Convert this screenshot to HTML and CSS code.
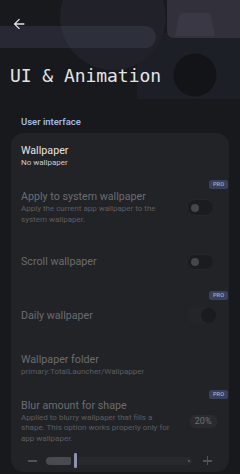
FILE: index.html
```html
<!DOCTYPE html>
<html lang="en">
<head>
<meta charset="utf-8">
<title>UI &amp; Animation</title>
<link rel="stylesheet" href="styles.css">
</head>
<body>
<div class="screen">
  <svg class="art" width="240" height="110" viewBox="0 0 240 110" aria-hidden="true">
    <path d="M137 46 Q137 33 150 33 H240 V99 H137 Z" fill="#1d1f27"/>
    <circle cx="113" cy="17" r="53" fill="#212229"/>
    <circle cx="195" cy="75" r="21.5" fill="#131418"/>
    <rect x="-20" y="26" width="176" height="22" rx="11" fill="rgba(72,76,98,0.32)"/>
    <path d="M167 0 H240 V38 H174 Q167 38 167 31 Z" fill="#32303a"/>
    <path d="M183 13 H207 Q210 13 211 16 L215 36 H175 L179 16 Q180 13 183 13 Z" fill="#3a3845"/>
  </svg>
  <header class="appbar">
    <button class="back" aria-label="Back">
      <svg width="16" height="16" viewBox="0 0 24 24"><path d="M20 11H7.83l5.59-5.59L12 4l-8 8 8 8 1.41-1.41L7.83 13H20v-2z" fill="#e2e2e6"/></svg>
    </button>
    <h1 class="title">UI &amp; Animation</h1>
  </header>

  <h2 class="section">User interface</h2>

  <section class="card">
    <div class="row r1">
      <div class="main">
        <div class="text">
          <div class="t">Wallpaper</div>
          <div class="s">No wallpaper</div>
        </div>
      </div>
    </div>

    <div class="row r2 off">
      <div class="badge-line b2"><span class="pro">PRO</span></div>
      <div class="main">
        <div class="text">
          <div class="t">Apply to system wallpaper</div>
          <div class="s">Apply the current app wallpaper to the system wallpaper.</div>
        </div>
        <div class="switch"><span class="knob"></span></div>
      </div>
    </div>

    <div class="row r3 off">
      <div class="main">
        <div class="text">
          <div class="t">Scroll wallpaper</div>
        </div>
        <div class="switch"><span class="knob"></span></div>
      </div>
    </div>

    <div class="row r4 off">
      <div class="badge-line b4"><span class="pro">PRO</span></div>
      <div class="main">
        <div class="text">
          <div class="t">Daily wallpaper</div>
        </div>
        <div class="switch on"><span class="knob"></span></div>
      </div>
    </div>

    <div class="row r5 off">
      <div class="main">
        <div class="text">
          <div class="t">Wallpaper folder</div>
          <div class="s">primary:TotalLauncher/Wallpapper</div>
        </div>
      </div>
    </div>

    <div class="row r6 off">
      <div class="badge-line"><span class="pro">PRO</span></div>
      <div class="main">
        <div class="text narrow">
          <div class="t">Blur amount for shape</div>
          <div class="s">Applied to blurry wallpaper that fills a shape. This option works properly only for app wallpaper.</div>
        </div>
        <div class="chip">20%</div>
      </div>
      <div class="slider">
        <span class="minus"></span>
        <div class="track">
          <span class="active" style="width:25px"></span>
          <span class="thumb"></span>
          <span class="rest"><i class="dot"></i></span>
        </div>
        <span class="plus"></span>
      </div>
    </div>
  </section>
</div>
</body>
</html>
```

FILE: styles.css
```css
* { box-sizing: border-box; }
html, body { margin: 0; padding: 0; background: #18191d; }
body { font-family: Roboto, "Noto Sans", sans-serif; }

.screen {
  position: relative;
  isolation: isolate;
  width: 240px;
  height: 474px;
  overflow: hidden;
  background: #18191d;
}

.art {
  position: absolute;
  left: 0;
  top: 0;
  z-index: -1;
}

.appbar {
  padding-top: 16px;
}

.back {
  display: block;
  width: 16px;
  height: 16px;
  margin: 0 0 0 10.5px;
  padding: 0;
  border: 0;
  background: none;
}
.back svg { display: block; }

.title {
  margin: 32px 0 0 0;
  padding-left: 10px;
  font-family: "DejaVu Sans Mono", "Liberation Mono", monospace;
  font-weight: normal;
  font-size: 18px;
  line-height: 24px;
  color: #e4e4e8;
  letter-spacing: -0.05px;
}

.section {
  margin: 27.8px 0 0 0;
  padding-left: 21px;
  font-size: 9.5px;
  line-height: 12px;
  font-weight: 500;
  color: #a9c0e8;
}

.card {
  margin: 5.5px 11px 0 11px;
  height: 339px;
  border-radius: 13px;
  background: #222327;
  padding-top: 11px;
}

.row { padding-left: 10px; }
.main {
  display: flex;
  align-items: center;
  padding-right: 15px;
}
.text { flex: 1; min-width: 0; }
.t {
  font-size: 10.7px;
  line-height: 14px;
  color: #e4e4e7;
  white-space: nowrap;
}
.s {
  font-size: 8px;
  line-height: 10.3px;
  color: #c9cacd;
}
.off .t { color: #6b6c70; }
.off .s { color: #5c5d61; }

.r2 { margin-top: 11px; }
.r3 { margin-top: 28.8px; }
.r4 { margin-top: 20.5px; }
.r5 { margin-top: 29.4px; }
.r6 { margin-top: 12px; }

.badge-line {
  display: flex;
  justify-content: flex-end;
  padding-right: 1px;
}
.b2 { margin-bottom: 1.5px; }
.b4 { margin-bottom: 7.3px; }

.pro {
  display: block;
  width: 19px;
  height: 9.3px;
  border-radius: 2.5px;
  background: #37415d;
  color: #a2aac4;
  font-size: 5.6px;
  line-height: 9.3px;
  font-weight: 500;
  text-align: center;
  letter-spacing: 0.1px;
}

.switch {
  flex: none;
  display: flex;
  align-items: center;
  width: 27px;
  height: 16.6px;
  margin-left: 20px;
  padding-left: 4.15px;
  border-radius: 8.3px;
  background: #1b1c20;
  box-shadow: inset 0 0 0 1px #26272b;
}
.knob {
  display: block;
  width: 8.3px;
  height: 8.3px;
  border-radius: 50%;
  background: #46474b;
}
.switch.on {
  justify-content: flex-end;
  padding-left: 0;
  background: #242529;
  box-shadow: none;
}
.switch.on .knob {
  width: 15px;
  height: 15px;
  margin-right: -2px;
  background: #1a1b1f;
}

.narrow { flex: 1; }
.chip {
  flex: none;
  margin-left: 16px;
  margin-right: -2.5px;
  width: 26.7px;
  height: 13.7px;
  border-radius: 5px;
  background: #2a2b2f;
  color: #6e6f73;
  font-size: 9px;
  line-height: 13.7px;
  text-align: center;
}

.slider {
  display: flex;
  align-items: center;
  height: 15px;
  margin-top: 9.5px;
  padding-left: 7px;
}
.minus {
  display: block;
  width: 9px;
  height: 1.2px;
  background: #505155;
}
.plus {
  position: relative;
  display: block;
  width: 9px;
  height: 9px;
  margin-left: 11px;
}
.plus::before, .plus::after {
  content: "";
  position: absolute;
  background: #505155;
}
.plus::before { left: 0; top: 3.9px; width: 9px; height: 1.2px; }
.plus::after { left: 3.9px; top: 0; width: 1.2px; height: 9px; }

.track {
  display: flex;
  align-items: center;
  width: 146px;
  height: 15px;
  margin-left: 9px;
}
.active {
  display: block;
  height: 8.3px;
  border-radius: 4.2px 1.5px 1.5px 4.2px;
  background: #4a4b50;
}
.thumb {
  display: block;
  width: 2.4px;
  height: 15px;
  margin: 0 1.5px 0 3.2px;
  border-radius: 1.2px;
  background: #8c92b0;
}
.rest {
  flex: 1;
  display: flex;
  align-items: center;
  justify-content: flex-end;
  height: 7.5px;
  padding-right: 2.5px;
  border-radius: 1.5px 3.8px 3.8px 1.5px;
  background: #28292d;
}
.dot {
  display: block;
  width: 1.6px;
  height: 1.6px;
  border-radius: 50%;
  background: #5c5d61;
}
```
